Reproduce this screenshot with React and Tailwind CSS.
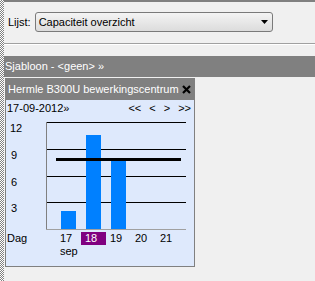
import React from 'react';

const days = ['17', '18', '19', '20', '21'];

function Chart() {
  const grid = [6, 33, 60, 86];
  const bars = [
    { x: 55, top: 95 },
    { x: 80, top: 19 },
    { x: 105, top: 42 },
  ];
  return (
    <svg width="188" height="115" className="block">
      {grid.map((y) => (
        <line key={y} x1="40" x2="180" y1={y + 0.5} y2={y + 0.5} stroke="#000" strokeWidth="1" />
      ))}
      <line x1="40.5" x2="40.5" y1="6" y2="113" stroke="#808080" />
      <line x1="40" x2="180" y1="113.5" y2="113.5" stroke="#a0a0a0" />
      {bars.map((b) => (
        <rect key={b.x} x={b.x} y={b.top} width="15" height={113 - b.top} fill="#0080ff" />
      ))}
      <rect x="50" y="42" width="125" height="3" fill="#000" />
      <g fontFamily="Liberation Sans, Arial, sans-serif" fontSize="11" fill="#000">
        <text x="4" y="16">12</text>
        <text x="5" y="43">9</text>
        <text x="5" y="70">6</text>
        <text x="5" y="96">3</text>
      </g>
    </svg>
  );
}

export default function App() {
  return (
    <div className="w-[315px] h-[281px] flex bg-[#f0f0f0] overflow-hidden font-['Liberation_Sans',Arial,sans-serif] text-[11px] text-black leading-none">
      <div className="w-[4px] shrink-0 bg-[image:repeating-conic-gradient(#808080_0%_25%,#ffffff_0%_50%)] bg-[length:2px_2px]" />
      <div className="flex-1 flex flex-col">
        <div className="h-[2px] bg-[#808080]" />
        <div className="h-[41px] flex items-center pl-[4px] pb-[1px]">
          <span>Lijst:</span>
          <div className="ml-[4px] w-[238px] h-[20px] rounded-[3px] border border-[#7a7a7a] bg-gradient-to-b from-[#f4f4f4] to-[#dcdcdc] flex items-center justify-between pl-[3px] pr-[4px]">
            <span>Capaciteit overzicht</span>
            <svg width="7" height="4" viewBox="0 0 7 4">
              <path d="M0 0h7L3.5 4z" fill="#000" />
            </svg>
          </div>
        </div>
        <div className="h-[1px] bg-[#a0a0a0]" />
        <div className="h-[1px] bg-white" />
        <div className="h-[11px]" />
        <div className="h-[21px] bg-[#808080] text-white flex items-center pl-[1px]">
          Sjabloon - &lt;geen&gt; »
        </div>
        <div className="mt-[1px] ml-[1px] w-[190px] border border-[#808080]">
          <div className="h-[21px] bg-[#808080] text-white flex items-center justify-between pl-[2px] pr-[3px]">
            <span>Hermle B300U bewerkingscentrum</span>
            <svg width="9" height="9" viewBox="0 0 9 9">
              <path d="M1 1l7 7M8 1l-7 7" stroke="#000" strokeWidth="2.2" />
            </svg>
          </div>
          <div className="bg-[#dee9fc] h-[166px] flex flex-col">
            <div className="h-[16px] flex items-center justify-between pl-[1px] pr-[3px]">
              <span>17-09-2012»</span>
              <div className="flex gap-[8px]">
                <span>&lt;&lt;</span>
                <span>&lt;</span>
                <span>&gt;</span>
                <span>&gt;&gt;</span>
              </div>
            </div>
            <Chart />
            <div className="flex h-[14px] items-center">
              <span className="w-[50px] pl-[1px]">Dag</span>
              {days.map((d) => (
                <span
                  key={d}
                  className={
                    d === '18'
                      ? 'w-[25px] h-[13px] flex items-center pl-[4px] bg-[#800080] text-white'
                      : 'w-[25px] h-[13px] flex items-center pl-[4px]'
                  }
                >
                  {d}
                </span>
              ))}
            </div>
            <div className="h-[12px] flex items-center pl-[54px]">sep</div>
          </div>
        </div>
      </div>
    </div>
  );
}
